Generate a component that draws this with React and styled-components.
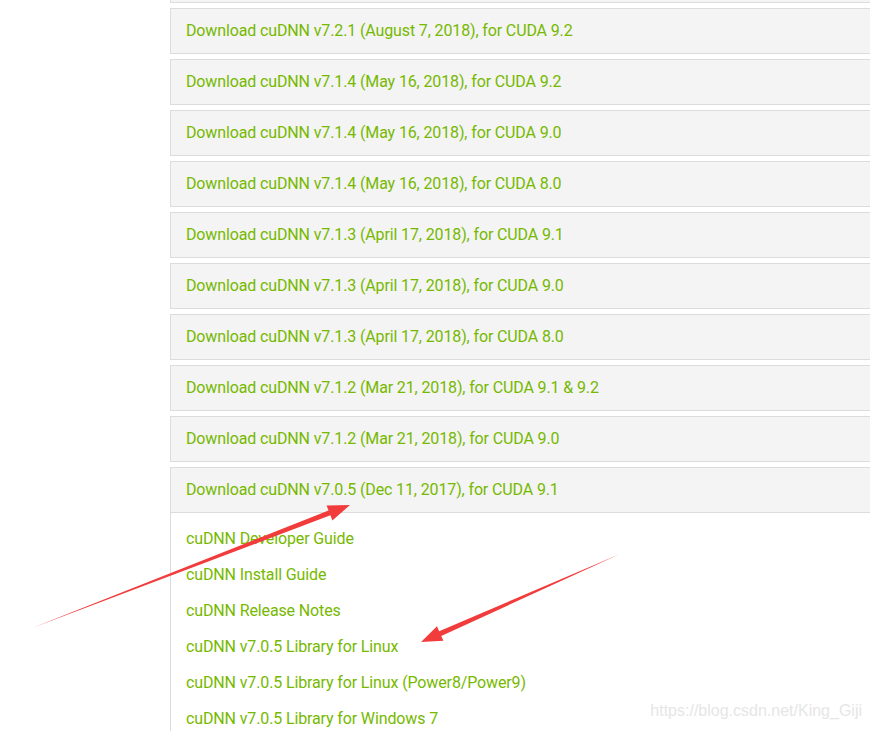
import React from 'react';
import styled, { createGlobalStyle } from 'styled-components';

const GlobalStyle = createGlobalStyle`
  html, body { margin: 0; padding: 0; background: #fff; overflow: hidden; }
  body { width: 870px; height: 731px; }
`;

const Page = styled.div`
  position: relative;
  width: 870px; height: 731px;
  overflow: hidden;
  font-family: Roboto, "Liberation Sans", sans-serif;
`;
const List = styled.div`
  margin: -43px 0 0 170px;
  width: 760px;
  display: flex; flex-direction: column; gap: 5px;
`;
const Panel = styled.div`
  border: 1px solid #dcdcdc;
  background: #fff;
`;
const Header = styled.div`
  box-sizing: border-box;
  height: ${p => (p.open ? 45 : 44)}px;
  display: flex; align-items: center;
  padding: 0 0 2px 15px;
  background: #f4f4f4;
  border-bottom: ${p => (p.open ? '1px solid #dcdcdc' : 'none')};
  color: #76b900;
  font-size: 16px;
  letter-spacing: -0.13px;
`;
const Body = styled.div`
  padding: 8px 0 0 15px;
  display: flex; flex-direction: column;
  height: 260px;
`;
const Link = styled.a`
  display: block;
  line-height: 36px;
  color: #76b900;
  font-size: 16px;
  letter-spacing: -0.13px;
  text-decoration: none;
`;
const Watermark = styled.div`
  position: absolute; right: 8px; top: 702px;
  font-family: "Liberation Sans", Arial, sans-serif;
  font-size: 16px;
  color: #e6e6e6;
`;
const Overlay = styled.svg`
  position: absolute; left: 0; top: 0;
  pointer-events: none;
`;

const rows = [
  '',
  'Download cuDNN v7.2.1 (August 7, 2018), for CUDA 9.2',
  'Download cuDNN v7.1.4 (May 16, 2018), for CUDA 9.2',
  'Download cuDNN v7.1.4 (May 16, 2018), for CUDA 9.0',
  'Download cuDNN v7.1.4 (May 16, 2018), for CUDA 8.0',
  'Download cuDNN v7.1.3 (April 17, 2018), for CUDA 9.1',
  'Download cuDNN v7.1.3 (April 17, 2018), for CUDA 9.0',
  'Download cuDNN v7.1.3 (April 17, 2018), for CUDA 8.0',
  'Download cuDNN v7.1.2 (Mar 21, 2018), for CUDA 9.1 & 9.2',
  'Download cuDNN v7.1.2 (Mar 21, 2018), for CUDA 9.0',
];

const links = [
  'cuDNN Developer Guide',
  'cuDNN Install Guide',
  'cuDNN Release Notes',
  'cuDNN v7.0.5 Library for Linux',
  'cuDNN v7.0.5 Library for Linux (Power8/Power9)',
  'cuDNN v7.0.5 Library for Windows 7',
];

// arrow polygon from tail (x1,y1) to tip (x2,y2)
function arrowPoints(x1, y1, x2, y2, head = 22, hw = 8, sw = 2.6) {
  const dx = x2 - x1, dy = y2 - y1;
  const len = Math.hypot(dx, dy);
  const ux = dx / len, uy = dy / len;
  const nx = -uy, ny = ux;
  const bx = x2 - ux * head, by = y2 - uy * head;
  const pts = [
    [x1, y1],
    [bx + nx * sw, by + ny * sw],
    [bx + nx * hw, by + ny * hw],
    [x2, y2],
    [bx - nx * hw, by - ny * hw],
    [bx - nx * sw, by - ny * sw],
  ];
  return pts.map(p => p.join(',')).join(' ');
}

export default function App() {
  return (
    <Page>
      <GlobalStyle />
      <List>
        {rows.map((r, i) => (
          <Panel key={i}><Header>{r}</Header></Panel>
        ))}
        <Panel>
          <Header open>Download cuDNN v7.0.5 (Dec 11, 2017), for CUDA 9.1</Header>
          <Body>
            {links.map(l => <Link key={l} href="#">{l}</Link>)}
          </Body>
        </Panel>
      </List>
      <Overlay width="870" height="731">
        <polygon points={arrowPoints(32, 628, 350, 505)} fill="#f23c3c" />
        <polygon points={arrowPoints(620, 554, 421, 642, 21, 8, 2.6)} fill="#f23c3c" />
      </Overlay>
      <Watermark>https://blog.csdn.net/King_Giji</Watermark>
    </Page>
  );
}
